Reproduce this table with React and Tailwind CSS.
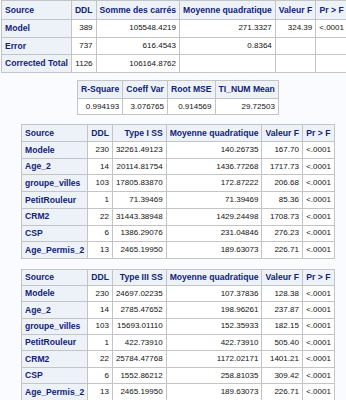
import React from 'react';

const HEAD = 'border border-[#c4c4c4] bg-[#edf2f9] text-[#112277] font-bold text-[8.6px] px-[3px] whitespace-nowrap';
const CELL = 'border border-[#c4c4c4] bg-white text-[#111] text-right text-[8px] px-[3px] whitespace-nowrap';

const anova = {
  cols: ['w-[73px]', 'w-[24px]', 'w-[78px]', 'w-[92px]', 'w-[40px]', 'w-[30px]'],
  head: ['Source', 'DDL', 'Somme des carrés', 'Moyenne quadratique', 'Valeur F', 'Pr > F'],
  rows: [
    ['Model', '389', '105548.4219', '271.3327', '324.39', '<.0001'],
    ['Error', '737', '616.4543', '0.8364', '', ''],
    ['Corrected Total', '1126', '106164.8762', '', '', ''],
  ],
};

const fit = {
  cols: ['w-[42px]', 'w-[43px]', 'w-[44px]', 'w-[61px]'],
  head: ['R-Square', 'Coeff Var', 'Root MSE', 'TI_NUM Mean'],
  rows: [['0.994193', '3.076765', '0.914569', '29.72503']],
};

const sourceCols = ['w-[62px]', 'w-[23px]', 'w-[52px]', 'w-[91px]', 'w-[40px]', 'w-[32px]'];

const type1 = [
  ['Modele', '230', '32261.49123', '140.26735', '167.70', '<.0001'],
  ['Age_2', '14', '20114.81754', '1436.77268', '1717.73', '<.0001'],
  ['groupe_villes', '103', '17805.83870', '172.87222', '206.68', '<.0001'],
  ['PetitRouleur', '1', '71.39469', '71.39469', '85.36', '<.0001'],
  ['CRM2', '22', '31443.38948', '1429.24498', '1708.73', '<.0001'],
  ['CSP', '6', '1386.29076', '231.04846', '276.23', '<.0001'],
  ['Age_Permis_2', '13', '2465.19950', '189.63073', '226.71', '<.0001'],
];

const type3 = [
  ['Modele', '230', '24697.02235', '107.37836', '128.38', '<.0001'],
  ['Age_2', '14', '2785.47652', '198.96261', '237.87', '<.0001'],
  ['groupe_villes', '103', '15693.01110', '152.35933', '182.15', '<.0001'],
  ['PetitRouleur', '1', '422.73910', '422.73910', '505.40', '<.0001'],
  ['CRM2', '22', '25784.47768', '1172.02171', '1401.21', '<.0001'],
  ['CSP', '6', '1552.86212', '258.81035', '309.42', '<.0001'],
  ['Age_Permis_2', '13', '2465.19950', '189.63073', '226.71', '<.0001'],
];

function SasTable({ cols, head, rows, headH, rowH, rowHeads = true, headAlign }) {
  return (
    <table className="table-fixed border-collapse leading-none">
      <colgroup>
        {cols.map((c, i) => (
          <col key={i} className={c} />
        ))}
      </colgroup>
      <thead>
        <tr className={headH}>
          {head.map((h, i) => (
            <th key={i} className={`${HEAD} ${headAlign[i]}`}>
              {h}
            </th>
          ))}
        </tr>
      </thead>
      <tbody>
        {rows.map((r, ri) => (
          <tr key={ri} className={rowH}>
            {r.map((v, ci) =>
              ci === 0 && rowHeads ? (
                <th key={ci} className={`${HEAD} text-left`}>
                  {v}
                </th>
              ) : (
                <td key={ci} className={CELL}>
                  {v}
                </td>
              )
            )}
          </tr>
        ))}
      </tbody>
    </table>
  );
}

export default function App() {
  return (
    <div className="w-[346px] h-[400px] overflow-hidden bg-[#fafbfe] font-['Liberation_Sans',Arial,sans-serif]">
      <div className="pl-px">
        <SasTable
          {...anova}
          headH="h-[19px]"
          rowH="h-[17.7px]"
          headAlign={['text-left', 'text-center', 'text-center', 'text-center', 'text-center', 'text-center']}
        />
      </div>

      <div className="mt-[7px] pl-[77px]">
        <SasTable
          {...fit}
          rowHeads={false}
          headH="h-[18px]"
          rowH="h-[16px]"
          headAlign={['text-center', 'text-center', 'text-center', 'text-center']}
        />
      </div>

      <div className="mt-[9px] pl-[21px]">
        <SasTable
          cols={sourceCols}
          head={['Source', 'DDL', 'Type I SS', 'Moyenne quadratique', 'Valeur F', 'Pr > F']}
          rows={type1}
          headH="h-[17px]"
          rowH="h-[16.7px]"
          headAlign={['text-left', 'text-center', 'text-right', 'text-center', 'text-center', 'text-center']}
        />
      </div>

      <div className="mt-[10px] pl-[21px]">
        <SasTable
          cols={sourceCols}
          head={['Source', 'DDL', 'Type III SS', 'Moyenne quadratique', 'Valeur F', 'Pr > F']}
          rows={type3}
          headH="h-[16px]"
          rowH="h-[16.4px]"
          headAlign={['text-left', 'text-center', 'text-right', 'text-center', 'text-center', 'text-center']}
        />
      </div>
    </div>
  );
}
